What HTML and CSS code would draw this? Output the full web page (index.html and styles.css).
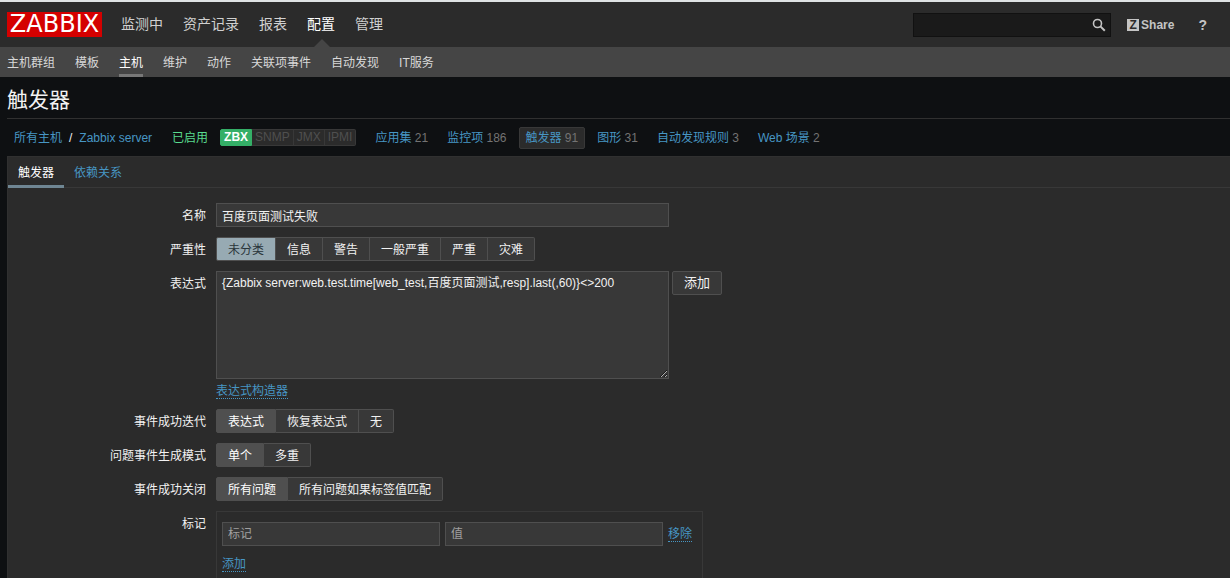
FILE: index.html
```
<!DOCTYPE html>
<html lang="zh-CN">
<head>
  <meta charset="UTF-8">
  <meta name="viewport" content="width=device-width, initial-scale=1.0">
  <title>触发器的配置</title>
  <link rel="stylesheet" href="styles.css">
</head>
<body>
  <header class="header">
    <a class="logo" href="#">ZABBIX</a>
    <nav class="top-nav">
      <a href="#">监测中</a>
      <a href="#">资产记录</a>
      <a href="#">报表</a>
      <a href="#" class="selected">配置</a>
      <a href="#">管理</a>
    </nav>
    <form class="search" role="search">
      <input type="text" id="search" aria-label="搜索">
      <button type="submit" aria-label="搜索">
        <svg width="14" height="14" viewBox="0 0 14 14" fill="none" stroke="#c4c4c4">
          <circle cx="5.5" cy="5.5" r="4" stroke-width="1.6"/>
          <path d="M8.4 8.4L12.8 12.8" stroke-width="2"/>
        </svg>
      </button>
    </form>
    <a class="share" href="#"><span class="share-icon">Z</span>Share</a>
    <a class="help" href="#">?</a>
  </header>

  <nav class="sub-nav">
    <a href="#">主机群组</a>
    <a href="#">模板</a>
    <a href="#" class="selected">主机</a>
    <a href="#">维护</a>
    <a href="#">动作</a>
    <a href="#">关联项事件</a>
    <a href="#">自动发现</a>
    <a href="#">IT服务</a>
  </nav>

  <main class="article">
    <h1>触发器</h1>

    <div class="object-nav">
      <div class="breadcrumbs">
        <a href="#">所有主机</a>
        <span>/</span>
        <a href="#">Zabbix server</a>
      </div>
      <span class="green">已启用</span>
      <div class="status">
        <span class="on">ZBX</span>
        <span>SNMP</span>
        <span>JMX</span>
        <span>IPMI</span>
      </div>
      <div class="object-links">
        <span><a href="#">应用集</a> 21</span>
        <span><a href="#">监控项</a> 186</span>
        <span class="selected"><a href="#">触发器</a> 91</span>
        <span><a href="#">图形</a> 31</span>
        <span><a href="#">自动发现规则</a> 3</span>
        <span><a href="#">Web 场景</a> 2</span>
      </div>
    </div>

    <div class="panel">
      <div class="tabs">
        <a href="#" class="selected">触发器</a>
        <a href="#">依赖关系</a>
      </div>

      <form class="trigger-form">
        <label class="title" for="name">名称</label>
        <div><input type="text" id="name" class="wide" value="百度页面测试失败"></div>

        <span class="title" id="severity">严重性</span>
        <div class="radio-list severity" role="radiogroup" aria-labelledby="severity">
          <input type="radio" name="severity" id="severity0" checked><label for="severity0">未分类</label>
          <input type="radio" name="severity" id="severity1"><label for="severity1">信息</label>
          <input type="radio" name="severity" id="severity2"><label for="severity2">警告</label>
          <input type="radio" name="severity" id="severity3"><label for="severity3">一般严重</label>
          <input type="radio" name="severity" id="severity4"><label for="severity4">严重</label>
          <input type="radio" name="severity" id="severity5"><label for="severity5">灾难</label>
        </div>

        <label class="title" for="expression">表达式</label>
        <div>
          <div class="expression">
            <textarea id="expression" class="wide" spellcheck="false">{Zabbix server:web.test.time[web_test,百度页面测试,resp].last(,60)}&lt;&gt;200</textarea>
            <button type="button">添加</button>
          </div>
          <a class="action" href="#">表达式构造器</a>
        </div>

        <span class="title" id="recovery">事件成功迭代</span>
        <div class="radio-list" role="radiogroup" aria-labelledby="recovery">
          <input type="radio" name="recovery" id="recovery0" checked><label for="recovery0">表达式</label>
          <input type="radio" name="recovery" id="recovery1"><label for="recovery1">恢复表达式</label>
          <input type="radio" name="recovery" id="recovery2"><label for="recovery2">无</label>
        </div>

        <span class="title" id="type">问题事件生成模式</span>
        <div class="radio-list" role="radiogroup" aria-labelledby="type">
          <input type="radio" name="type" id="type0" checked><label for="type0">单个</label>
          <input type="radio" name="type" id="type1"><label for="type1">多重</label>
        </div>

        <span class="title" id="correlation">事件成功关闭</span>
        <div class="radio-list" role="radiogroup" aria-labelledby="correlation">
          <input type="radio" name="correlation" id="correlation0" checked><label for="correlation0">所有问题</label>
          <input type="radio" name="correlation" id="correlation1"><label for="correlation1">所有问题如果标签值匹配</label>
        </div>

        <span class="title">标记</span>
        <div class="tags">
          <div class="tag-row">
            <input type="text" placeholder="标记" aria-label="标记">
            <input type="text" placeholder="值" aria-label="值">
            <a class="action" href="#">移除</a>
          </div>
          <a class="action" href="#">添加</a>
        </div>
      </form>
    </div>
  </main>
</body>
</html>
```
FILE: styles.css
```
* {
  box-sizing: border-box;
}
body {
  margin: 0;
  height: 100vh;
  overflow: hidden;
  display: flex;
  flex-direction: column;
  background-color: #0e1012;
  color: #f2f2f2;
  font-family: "Liberation Sans", "Noto Sans CJK SC", Arial, sans-serif;
  font-size: 12px;
  line-height: 16px;
}
a {
  color: #4796c4;
  text-decoration: none;
}
input,
textarea,
button {
  font: inherit;
  color: #f2f2f2;
  margin: 0;
}

/* header */
.header {
  display: flex;
  align-items: center;
  flex-shrink: 0;
  height: 47px;
  padding: 0 23px 0 7px;
  background-color: #2b2b2b;
  border-top: 2px solid #dfe3e4;
}
.logo {
  width: 95px;
  height: 25px;
  background-color: #d40000;
  color: #fff;
  font-family: "DejaVu Sans", sans-serif;
  font-size: 24px;
  line-height: 25px;
  text-align: center;
}
.top-nav {
  display: flex;
  align-self: stretch;
  gap: 20px;
  margin-left: 19px;
  font-size: 14px;
  line-height: 44px;
}
.top-nav a {
  position: relative;
  color: #d0d0d0;
}
.top-nav a.selected {
  color: #fff;
}
.top-nav a.selected::after {
  content: "";
  position: absolute;
  left: 50%;
  bottom: 0;
  margin-left: -7px;
  border: 8px solid transparent;
  border-top: 0;
  border-bottom-color: #454545;
}
.search {
  display: flex;
  width: 198px;
  height: 24px;
  margin-left: auto;
  background-color: #1a1a1a;
  border: 1px solid #111;
}
.search input {
  flex: 1;
  min-width: 0;
  padding: 0 5px;
  background: none;
  border: 0;
}
.search button {
  display: flex;
  align-items: center;
  padding: 0 4px;
  background: none;
  border: 0;
}
.share,
.help {
  color: #c4c4c4;
  font-weight: bold;
}
.share {
  display: flex;
  align-items: center;
  gap: 2px;
  margin-left: 16px;
}
.share-icon {
  width: 12px;
  height: 12px;
  background-color: #c4c4c4;
  color: #2b2b2b;
  line-height: 12px;
  text-align: center;
}
.help {
  margin-left: 24px;
  font-size: 14px;
}

/* second level menu */
.sub-nav {
  display: flex;
  flex-shrink: 0;
  gap: 20px;
  height: 30px;
  padding: 0 7px;
  background-color: #454545;
  line-height: 32px;
}
.sub-nav a {
  height: 30px;
  color: #d8d8d8;
}
.sub-nav a.selected {
  color: #fff;
  border-bottom: 3px solid #787878;
}

/* page */
.article {
  display: flex;
  flex-direction: column;
  flex: 1;
  padding-left: 7px;
}
h1 {
  margin: 0;
  height: 42px;
  border-bottom: 1px solid #303030;
  font-size: 21px;
  font-weight: normal;
  line-height: 46px;
}
.object-nav {
  display: flex;
  align-items: center;
  height: 37px;
  padding-left: 7px;
}
.breadcrumbs {
  display: flex;
  gap: 7px;
}
.green {
  margin-left: 20px;
  color: #59db8f;
}
.status {
  display: flex;
  margin-left: 12px;
  line-height: 15px;
}
.status span {
  padding: 0 3px;
  background-color: #2b2b2b;
  border: 1px solid #383838;
  border-left-width: 0;
  color: #4f4f4f;
}
.status span:last-child {
  border-radius: 0 2px 2px 0;
}
.status .on {
  border: 1px solid #34af67;
  border-radius: 2px 0 0 2px;
  background-color: #34af67;
  color: #fff;
  font-weight: bold;
}
.object-links {
  display: flex;
  gap: 5px;
  margin-left: 12px;
  color: #737373;
}
.object-links span {
  padding: 2px 6px;
  border: 1px solid transparent;
  border-radius: 2px;
}
.object-links .selected {
  background-color: #2b2b2b;
  border-color: #383838;
}
.panel {
  flex: 1;
  background-color: #2b2b2b;
  border: 1px solid #303030;
  border-width: 1px 0 0 1px;
}
.tabs {
  display: flex;
  height: 31px;
  border-bottom: 1px solid #383838;
  line-height: 33px;
}
.tabs a {
  height: 31px;
  padding: 0 10px;
}
.tabs .selected {
  border-bottom: 3px solid #6f8693;
  color: #fff;
}

/* form */
.trigger-form {
  display: grid;
  grid-template-columns: 198px 1fr;
  gap: 10px;
  padding-top: 15px;
}
.title {
  padding-top: 2px;
  line-height: 22px;
  text-align: right;
}
input[type="text"],
textarea {
  display: block;
}
.wide,
.tag-row input {
  height: 24px;
  padding: 0 5px;
  background-color: #383838;
  border: 1px solid #4f4f4f;
}
.wide {
  width: 453px;
}
.radio-list {
  display: flex;
  line-height: 20px;
}
.radio-list input {
  position: absolute;
  opacity: 0;
}
.radio-list label {
  padding: 2px 11px 0;
  background-color: #383838;
  border: 1px solid #4f4f4f;
  border-left-width: 0;
}
.radio-list label:first-of-type {
  border-left-width: 1px;
  border-radius: 2px 0 0 2px;
}
.radio-list label:last-child {
  border-radius: 0 2px 2px 0;
}
.radio-list input:checked + label {
  background-color: #4f4f4f;
  color: #fff;
}
.severity input:checked + label {
  background-color: #97aab3;
  color: #2a353a;
}
.expression {
  display: flex;
  align-items: flex-start;
  gap: 3px;
  margin-bottom: 4px;
}
.expression textarea {
  height: 108px;
  padding: 3px 5px;
  resize: vertical;
}
.expression button {
  height: 24px;
  padding: 0 11px;
  background-color: #383838;
  border: 1px solid #4f4f4f;
  border-radius: 2px;
  font-size: 13px;
}
.action {
  display: inline-block;
  padding-top: 2px;
  line-height: 13px;
  vertical-align: top;
  border-bottom: 1px dotted #4796c4;
}
.tags {
  width: 487px;
  padding: 10px 5px;
  border: 1px solid #383838;
}
.tag-row {
  display: flex;
  align-items: center;
  gap: 5px;
  margin-bottom: 10px;
}
.tag-row input {
  width: 218px;
}
::placeholder {
  color: #a0a0a0;
}
```
